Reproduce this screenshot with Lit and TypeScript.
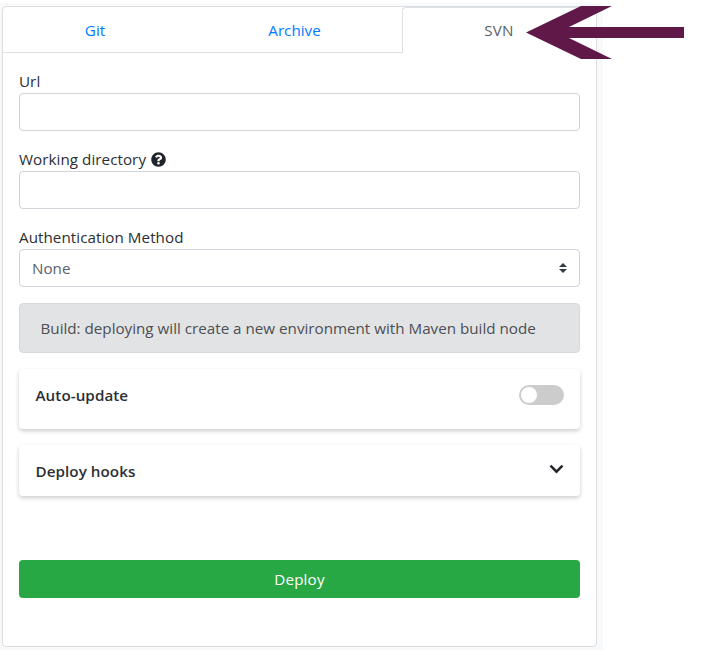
import { LitElement, html, css, svg } from "lit";
import { customElement } from "lit/decorators.js";

const helpIcon = html`<svg class="help" viewBox="0 0 512 512" aria-hidden="true">
  ${svg`<path d="M504 256c0 137-111 248-248 248S8 393 8 256 119 8 256 8s248 111 248 248zM262.700 90c-54.500 0-89.300 23-116.500 63.800-3.500 5.300-2.400 12.400 2.700 16.300l34.700 26.300c5.200 3.900 12.600 3 16.700-2.100 17.900-22.700 30.100-35.800 57.300-35.800 20.400 0 45.700 13.100 45.700 33 0 15-12.400 22.700-32.500 34C247.100 238.500 216 254.900 216 296v4c0 6.600 5.400 12 12 12h56c6.600 0 12-5.400 12-12v-1.300c0-28.500 83.200-29.600 83.200-106.700 0-58-60.200-102-116.500-102zM256 338c-25.400 0-46 20.600-46 46s20.600 46 46 46 46-20.600 46-46-20.600-46-46-46z"/>`}
</svg>`;

@customElement("app-root")
export class AppRoot extends LitElement {
  static styles = css`
    :host {
      display: block;
      position: relative;
      height: 655px;
      box-sizing: border-box;
      padding-top: 3px;
      background: #fff;
      color: #2b2f33;
      font: 15.200px/24px "Open Sans", "Noto Sans", sans-serif;
      overflow: hidden;
    }
    * { box-sizing: border-box; }
    .page {
      width: 603px;
      height: 647px;
      padding: 3px 0 0 2px;
      background: #f8f9fa;
    }
    .panel {
      width: 595px;
      height: 641px;
      border: 1px solid #dcdddf;
      border-radius: 4px;
      background: #fff;
    }
    .tabs {
      display: grid;
      grid-template-columns: 184px 215px 194px;
      height: 46px;
    }
    .tab {
      padding-top: 11px;
      text-align: center;
      color: #007bff;
      border-bottom: 1px solid #dee2e6;
    }
    .active {
      color: #5a6168;
      border: 1px solid #dee2e6;
      border-width: 1px 0 0 1px;
      border-radius: 4px 4px 0 0;
      padding: 10px 1px 0 0;
      letter-spacing: 0.300px;
    }
    .body { padding: 16px; }
    .field { margin-bottom: 16px; }
    .label { display: flex; align-items: center; height: 24px; letter-spacing: 0.050px; }
    .help { width: 15px; height: 15px; margin-left: 5px; fill: #212529; }
    .control {
      display: flex;
      align-items: center;
      justify-content: space-between;
      height: 38px;
      padding: 0 12px;
      border: 1px solid #ced4da;
      border-radius: 4px;
      color: #5a6168;
    }
    .sort { width: 8px; height: 10px; fill: #343a40; }
    .notice {
      height: 50px;
      padding: 12px 20.500px;
      border: 1px solid #d6d8db;
      border-radius: 4px;
      background: #e2e3e5;
      color: #4c4f53;
      white-space: nowrap;
    }
    .row {
      display: flex;
      justify-content: space-between;
      margin-top: 16px;
      padding: 14px 16px 0;
      height: 60px;
      border-radius: 4px;
      box-shadow: 0 2px 4px rgba(0, 0, 0, 0.2);
      font-weight: 600;
    }
    .title { margin-left: 0.500px; letter-spacing: 0.060px; }
    .hooks { height: 51px; }
    .switch {
      width: 45px;
      height: 20px;
      margin-top: 2px;
      padding: 2px;
      border-radius: 10px;
      background: #ccc;
    }
    .knob { width: 16px; height: 16px; border-radius: 50%; background: #fff; }
    .chevron {
      width: 15px;
      height: 10px;
      margin-top: 5px;
      fill: none;
      stroke: #212529;
      stroke-width: 2.500;
    }
    .deploy {
      display: block;
      width: 100%;
      height: 38px;
      margin-top: 64px;
      padding: 0;
      border: 0;
      border-radius: 4px;
      background: #28a745;
      color: #fff;
      font: inherit;
      letter-spacing: 0.150px;
    }
    .arrow {
      position: absolute;
      left: 526px;
      top: 6px;
      width: 158px;
      height: 53px;
      fill: #601848;
    }
  `;

  render() {
    return html`
      <div class="page">
        <div class="panel">
          <div class="tabs">
            <div class="tab">Git</div>
            <div class="tab">Archive</div>
            <div class="tab active">SVN</div>
          </div>
          <div class="body">
            <div class="field">
              <div class="label">Url</div>
              <div class="control"></div>
            </div>
            <div class="field">
              <div class="label"><span>Working directory</span>${helpIcon}</div>
              <div class="control"></div>
            </div>
            <div class="field">
              <div class="label">Authentication Method</div>
              <div class="control">
                <span>None</span>
                <svg class="sort" viewBox="0 0 8 10"><path d="M4 0L8 4H0zM4 10L0 6H8z" /></svg>
              </div>
            </div>
            <div class="notice">Build: deploying will create a new environment with Maven build node</div>
            <div class="row">
              <span class="title">Auto-update</span>
              <div class="switch"><div class="knob"></div></div>
            </div>
            <div class="row hooks">
              <span class="title">Deploy hooks</span>
              <svg class="chevron" viewBox="0 0 15 10"><path d="M1.500 1.700L7.500 7.700L13.500 1.700" /></svg>
            </div>
            <button class="deploy">Deploy</button>
          </div>
        </div>
      </div>
      <svg class="arrow" viewBox="0 0 158 53">
        <path d="M0 26.500L55 0H86L43 21H158V32H43L86 53H55Z" />
      </svg>
    `;
  }
}
